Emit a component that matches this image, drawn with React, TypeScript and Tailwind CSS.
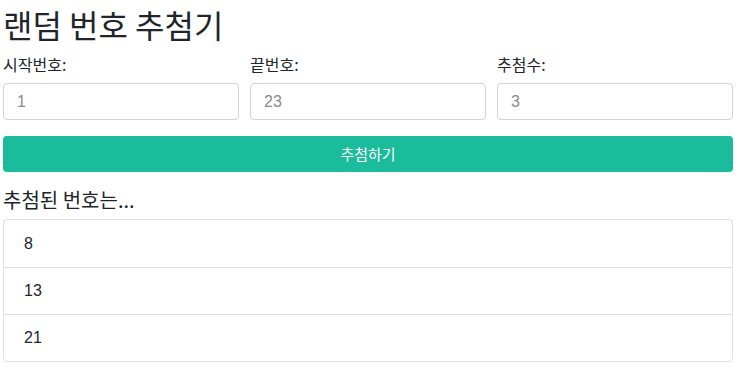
import React from 'react';

const font = { fontFamily: '"Noto Sans CJK KR", "Liberation Sans", sans-serif' };

export default function App() {
  const numbers = [8, 13, 21];

  return (
    <div className="w-[741px] h-[370px] bg-white text-[#212529] pl-[3px] pr-[8px] overflow-hidden" style={font}>
      <h1 className="text-[32px] leading-[38px] pt-[5px] font-normal">랜덤 번호 추첨기</h1>

      <div className="grid grid-cols-3 gap-[11px] mt-[10px]">
        {[
          { label: '시작번호:', ph: '1' },
          { label: '끝번호:', ph: '23' },
          { label: '추첨수:', ph: '3' },
        ].map((f) => (
          <div key={f.label} className="flex flex-col">
            <label className="text-[16px] leading-[22px] mb-[8px]">{f.label}</label>
            <input
              className="h-[37px] w-full rounded-[4px] border border-[#ced4da] px-[13px] text-[16px] placeholder-[#8a8a8a] outline-none"
              style={{ fontFamily: '"Liberation Sans", "Noto Sans CJK KR", sans-serif' }}
              placeholder={f.ph}
            />
          </div>
        ))}
      </div>

      <button className="mt-[16px] w-full h-[36px] rounded-[4px] bg-[#1abc9c] text-white text-[15px]">
        추첨하기
      </button>

      <h4 className="text-[20px] leading-[26px] mt-[15px] mb-[6px]">추첨된 번호는...</h4>

      <ul className="border border-[#dfdfdf] rounded-[4px]">
        {numbers.map((n, i) => (
          <li
            key={n}
            className={`h-[47px] flex items-center px-[20px] text-[16px] ${i > 0 ? 'border-t border-[#dfdfdf]' : ''}`}
            style={{ fontFamily: '"Liberation Sans", sans-serif' }}
          >
            {n}
          </li>
        ))}
      </ul>
    </div>
  );
}
